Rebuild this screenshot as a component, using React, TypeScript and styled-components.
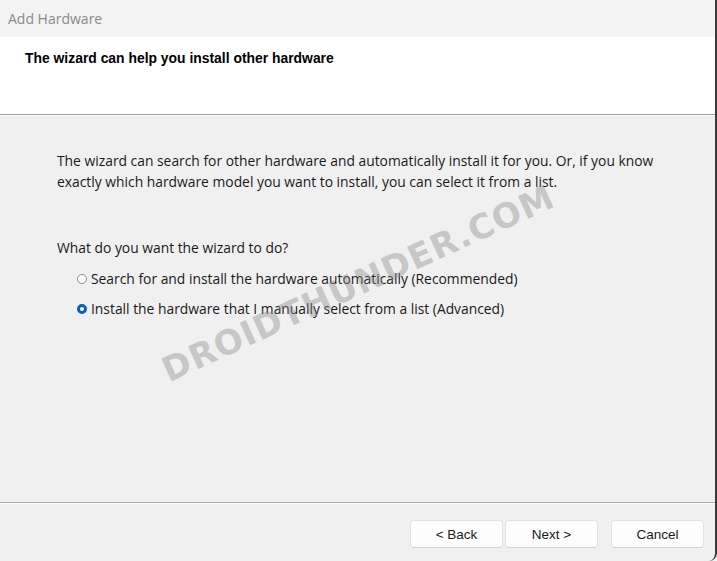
import React from "react";
import styled, { createGlobalStyle } from "styled-components";

const Global = createGlobalStyle`
  html, body { margin: 0; padding: 0; }
  body { width: 717px; height: 561px; overflow: hidden; background: #f0f0f0; }
  * { box-sizing: border-box; }
`;

const Window = styled.div`
  position: relative;
  width: 717px;
  height: 561px;
  display: flex;
  flex-direction: column;
  background: #f0f0f0;
  font-family: "Open Sans", "Noto Sans", sans-serif;
  overflow: hidden;
  border-right: 2px solid #3a3a3a;
  border-bottom-right-radius: 8px;
`;

const TitleBar = styled.div`
  height: 37px;
  display: flex;
  align-items: center;
  padding-left: 8px;
  background: #f3f3f3;
  color: #8a8a8a;
  font-size: 14px;
`;

const Header = styled.div`
  height: 78px;
  background: #ffffff;
  padding: 13px 0 0 25px;
  border-bottom: 1px solid #a0a0a0;
  box-shadow: 0 1px 0 #ffffff;
`;

const HeaderTitle = styled.div`
  font-family: "Liberation Sans", Arial, sans-serif;
  font-weight: bold;
  font-size: 13.9px;
  color: #000;
`;

const Body = styled.div`
  flex: 1;
  padding: 35px 0 0 57px;
  color: #1a1a1a;
  font-size: 13.85px;
`;

const Paragraph = styled.p`
  margin: 0;
  line-height: 21px;
`;

const Question = styled.p`
  margin: 45px 0 0 0;
  line-height: 21px;
`;

const Options = styled.div`
  display: flex;
  flex-direction: column;
  gap: 9px;
  margin-top: 10px;
  padding-left: 20px;
`;

const Option = styled.label`
  display: flex;
  align-items: center;
  gap: 4px;
  line-height: 21px;
`;

const Radio = styled.span<{ $checked?: boolean }>`
  width: 10px;
  height: 10px;
  border-radius: 50%;
  box-sizing: border-box;
  border: ${(p) => (p.$checked ? "3px solid #0a5bc4" : "1px solid #8a8a8a")};
  background: #fff;
  margin-top: 1px;
`;

const Footer = styled.div`
  height: 59px;
  border-top: 1px solid #a8a8a8;
  box-shadow: inset 0 1px 0 #ffffff;
  display: flex;
  justify-content: flex-end;
  align-items: flex-start;
  padding: 17px 11px 0 0;
`;

const ButtonGroup = styled.div`
  display: flex;
  gap: 2px;
  margin-right: 13px;
`;

const Button = styled.button`
  width: 93px;
  height: 28px;
  background: #fdfdfd;
  border: 1px solid #e2e2e2;
  border-bottom-color: #d0d0d0;
  border-radius: 4px;
  font-family: "Liberation Sans", Arial, sans-serif;
  font-size: 13.5px;
  color: #1a1a1a;
  padding: 0;
`;

const Watermark = styled.div`
  position: absolute;
  left: 358px;
  top: 283px;
  transform: translate(-50%, -50%) rotate(-24.5deg);
  font-family: "DejaVu Sans", sans-serif;
  font-weight: bold;
  font-size: 34px;
  letter-spacing: 1px;
  color: rgba(140, 140, 140, 0.42);
  white-space: nowrap;
  pointer-events: none;
`;

export default function App() {
  return (
    <>
      <Global />
      <Window>
        <TitleBar>Add Hardware</TitleBar>
        <Header>
          <HeaderTitle>The wizard can help you install other hardware</HeaderTitle>
        </Header>
        <Body>
          <Paragraph>
            The wizard can search for other hardware and automatically install it for you. Or, if you know
            <br />
            exactly which hardware model you want to install, you can select it from a list.
          </Paragraph>
          <Question>What do you want the wizard to do?</Question>
          <Options>
            <Option>
              <Radio />
              Search for and install the hardware automatically (Recommended)
            </Option>
            <Option>
              <Radio $checked />
              Install the hardware that I manually select from a list (Advanced)
            </Option>
          </Options>
        </Body>
        <Footer>
          <ButtonGroup>
            <Button>&lt; Back</Button>
            <Button>Next &gt;</Button>
          </ButtonGroup>
          <Button>Cancel</Button>
        </Footer>
        <Watermark>DROIDTHUNDER.COM</Watermark>
      </Window>
    </>
  );
}
